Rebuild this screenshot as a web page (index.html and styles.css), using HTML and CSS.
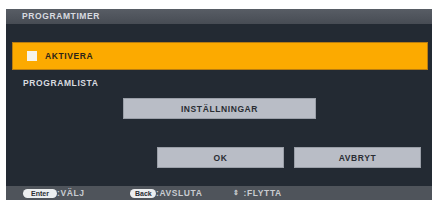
FILE: index.html
```html
<!DOCTYPE html>
<html lang="sv">
<head>
  <meta charset="UTF-8" />
  <title>Programtimer</title>
  <link rel="stylesheet" href="styles.css">
</head>
<body>
  <div class="dialog">
    <div class="titlebar">PROGRAMTIMER</div>

    <div class="option-row">
      <span class="checkbox"></span>
      <span class="option-label">AKTIVERA</span>
    </div>

    <div class="section-label">PROGRAMLISTA</div>

    <div class="settings-row">
      <button class="menu-btn settings-btn">INSTÄLLNINGAR</button>
    </div>

    <div class="action-row">
      <button class="menu-btn action-btn">OK</button>
      <button class="menu-btn action-btn">AVBRYT</button>
    </div>

    <div class="footer">
      <span class="hint hint-enter"><span class="key">Enter</span>:VÄLJ</span>
      <span class="hint hint-back"><span class="key key-small">Back</span>:AVSLUTA</span>
      <span class="hint hint-move"><span class="arrow">⇕</span>:FLYTTA</span>
    </div>
  </div>
</body>
</html>
```

FILE: styles.css
```css
body {
  margin: 0;
  padding: 9px 5px 4px 6px;
  background: #ffffff;
  font-family: "Liberation Sans", Arial, sans-serif;
  font-weight: bold;
}

.dialog {
  width: 426px;
  height: 191px;
  background: #232a33;
  display: flex;
  flex-direction: column;
  color: #d9dce0;
  font-size: 8.5px;
  letter-spacing: 0.6px;
}

.titlebar {
  height: 15px;
  line-height: 15px;
  padding-left: 16px;
  background: linear-gradient(#585d65, #474c54);
  color: #d8dbe0;
}

.option-row {
  margin: 18px 4px 0 6px;
  height: 26px;
  background: #fcaa00;
  border: 1px solid #b87c10;
  display: flex;
  align-items: center;
  padding-left: 14px;
}

.checkbox {
  width: 10px;
  height: 10px;
  background: #f6f3ea;
  margin-right: 8px;
}

.option-label {
  color: #2b2418;
}

.section-label {
  margin-top: 8px;
  padding-left: 17px;
  height: 11px;
  line-height: 11px;
}

.settings-row {
  margin-top: 9px;
  padding-left: 117px;
}

.menu-btn {
  font-family: inherit;
  font-weight: bold;
  font-size: 8.5px;
  letter-spacing: 0.6px;
  color: #2a2d33;
  background: #b9bdc6;
  border: 1px solid #9a9fa8;
  padding: 0;
  height: 21px;
  border-radius: 0;
}

.settings-btn {
  width: 193px;
}

.action-row {
  margin-top: 28px;
  padding-left: 151px;
  display: flex;
  gap: 10px;
}

.action-btn {
  width: 127px;
}

.footer {
  margin-top: auto;
  height: 14px;
  background: #4f545b;
  display: flex;
  align-items: center;
  color: #c9ccd1;
  font-size: 8.5px;
  padding-left: 17px;
}

.hint {
  display: flex;
  align-items: center;
}

.hint-enter {
  width: 107px;
}

.hint-back {
  width: 103px;
}

.key {
  background: #eceef0;
  color: #2a2d33;
  border-radius: 5px;
  height: 9px;
  line-height: 9px;
  padding: 0 5px;
  font-size: 7px;
  letter-spacing: 0;
  width: 24px;
  text-align: center;
}

.key-small {
  width: 16px;
}

.arrow {
  margin-right: 4px;
  font-size: 7px;
}
```
